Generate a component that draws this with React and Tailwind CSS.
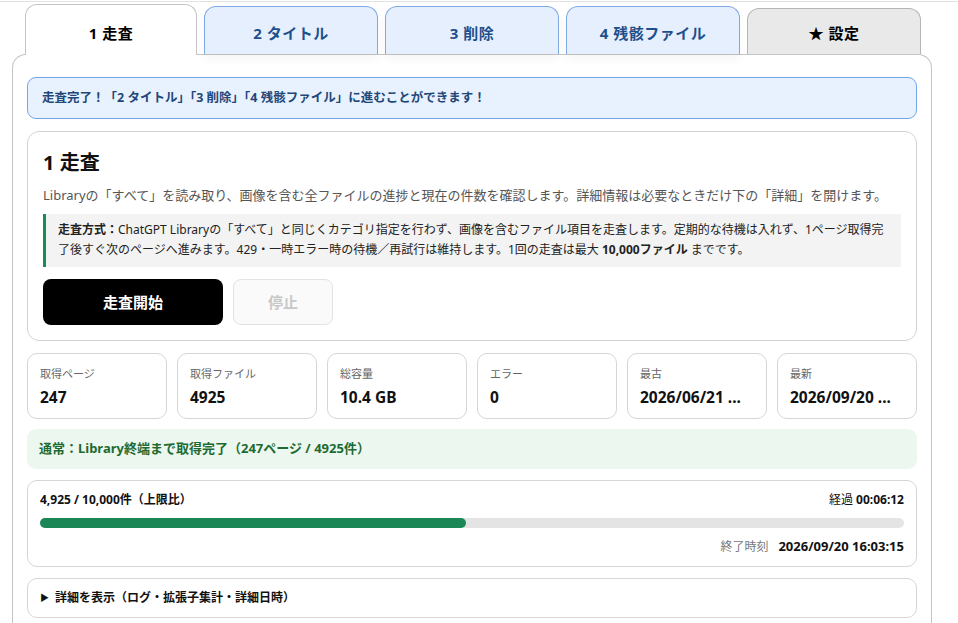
const font = { fontFamily: '"Noto Sans", "Noto Sans CJK JP", sans-serif' };

const tabs = [
  { label: '1 走査', kind: 'active' },
  { label: '2 タイトル', kind: 'blue' },
  { label: '3 削除', kind: 'blue' },
  { label: '4 残骸ファイル', kind: 'blue' },
  { label: '★ 設定', kind: 'gray' },
];

const stats = [
  { label: '取得ページ', value: '247' },
  { label: '取得ファイル', value: '4925' },
  { label: '総容量', value: '10.4 GB' },
  { label: 'エラー', value: '0' },
  { label: '最古', value: '2026/06/21 ...' },
  { label: '最新', value: '2026/09/20 ...' },
];

function Tab({ label, kind }) {
  if (kind === 'active') {
    return (
      <div className="relative z-10 -mb-px flex h-[51px] w-[172px] items-center justify-center rounded-t-[12px] border border-b-0 border-[#c4c4c4] bg-white pt-[7px] text-[15px] font-bold tracking-[0.5px] text-black">
        {label}
      </div>
    );
  }
  if (kind === 'gray') {
    return (
      <div className="relative z-10 flex h-[46px] w-[174px] items-center justify-center rounded-t-[12px] border border-b-0 border-[#b5b5b5] bg-[#e9e9e9] pt-[4px] text-[15px] font-bold tracking-[0.5px] text-black">
        {label}
      </div>
    );
  }
  return (
    <div className="relative z-10 flex h-[48px] w-[174px] items-center justify-center rounded-t-[12px] border border-b-0 border-[#7fa9e3] bg-[#e5effd] pt-[5px] text-[15px] font-bold tracking-[0.5px] text-[#1d4f8c] shadow-[0_6px_10px_rgba(0,0,0,0.04)]">
      {label}
    </div>
  );
}

export default function App() {
  const percent = (4925 / 10000) * 100;

  return (
    <div className="min-h-[623px] bg-white text-[#111]" style={font}>
      <div className="h-[2px] border-b border-[#e2e2e2]" />
      <div className="flex items-end gap-[7px] pl-[25px] pt-[2px]">
        {tabs.map((t) => (
          <Tab key={t.label} {...t} />
        ))}
      </div>
      <main className="ml-[12px] w-[920px] rounded-t-[14px] border border-b-0 border-[#c4c4c4] px-[14px] pt-[22px] pb-[10px]">
        <div className="flex h-[42px] items-center rounded-[9px] border border-[#74a5e6] bg-[#e8f2fe] px-[14px] text-[12.5px] font-bold text-[#1f4778]">
          走査完了！「2 タイトル」「3 削除」「4 残骸ファイル」に進むことができます！
        </div>

        <section className="mt-[12px] rounded-[12px] border border-[#d2d2d2] px-[15px] pt-[16px] pb-[15px]">
          <h2 className="text-[20px] font-bold leading-[30px]">1 走査</h2>
          <p className="mt-[7px] text-[13px] leading-[20px] text-[#555]">
            Libraryの「すべて」を読み取り、画像を含む全ファイルの進捗と現在の件数を確認します。詳細情報は必要なときだけ下の「詳細」を開けます。
          </p>
          <div className="mt-[9px] border-l-[3px] border-[#1a8a57] bg-[#f3f3f3] pt-[6px] pb-[7px] pl-[12px] pr-[10px] text-[12px] leading-[20px] text-[#222]">
            <b>走査方式：</b>ChatGPT Libraryの「すべて」と同じくカテゴリ指定を行わず、画像を含むファイル項目を走査します。定期的な待機は入れず、1ページ取得完了後すぐ次のページへ進みます。429・一時エラー時の待機／再試行は維持します。1回の走査は最大 <b>10,000ファイル</b> までです。
          </div>
          <div className="mt-[12px] flex gap-[10px]">
            <button className="h-[46px] w-[180px] rounded-[8px] bg-black text-[15px] font-bold text-white">走査開始</button>
            <button className="h-[46px] w-[100px] rounded-[8px] border border-[#e3e3e3] bg-[#fafafa] text-[15px] font-bold text-[#c8c8c8]">停止</button>
          </div>
        </section>

        <section className="mt-[12px] grid grid-cols-6 gap-[10px]">
          {stats.map((s) => (
            <div key={s.label} className="h-[66px] rounded-[10px] border border-[#d6d6d6] px-[12px] pt-[11px]">
              <div className="text-[11px] leading-[18px] text-[#666]">{s.label}</div>
              <div className="mt-[3px] truncate text-[15.5px] font-bold leading-[23px]">{s.value}</div>
            </div>
          ))}
        </section>

        <div className="mt-[10px] flex h-[40px] items-center rounded-[9px] bg-[#ecf7ef] px-[12px] text-[13px] font-bold text-[#1d6b33]">
          通常：Library終端まで取得完了（247ページ / 4925件）
        </div>

        <section className="mt-[11px] rounded-[10px] border border-[#d6d6d6] px-[12px] pt-[9px] pb-[8px]">
          <div className="flex justify-between text-[12px] font-bold leading-[20px]">
            <span>4,925 / 10,000件（上限比）</span>
            <span>
              <span className="font-normal">経過</span> 00:06:12
            </span>
          </div>
          <div className="mt-[8px] h-[10px] rounded-full bg-[#e4e4e4]">
            <div className="h-full rounded-full bg-[#1b8757]" style={{ width: `${percent}%` }} />
          </div>
          <div className="mt-[7px] flex items-baseline justify-end gap-[10px] leading-[22px]">
            <span className="text-[12px] text-[#777]">終了時刻</span>
            <span className="text-[13px] font-bold">2026/09/20 16:03:15</span>
          </div>
        </section>

        <div className="mt-[11px] flex h-[40px] items-center rounded-[10px] border border-[#d6d6d6] px-[12px] text-[12px] font-bold">
          <span className="mr-[6px] text-[9px]">▶</span>詳細を表示（ログ・拡張子集計・詳細日時）
        </div>
      </main>
    </div>
  );
}
